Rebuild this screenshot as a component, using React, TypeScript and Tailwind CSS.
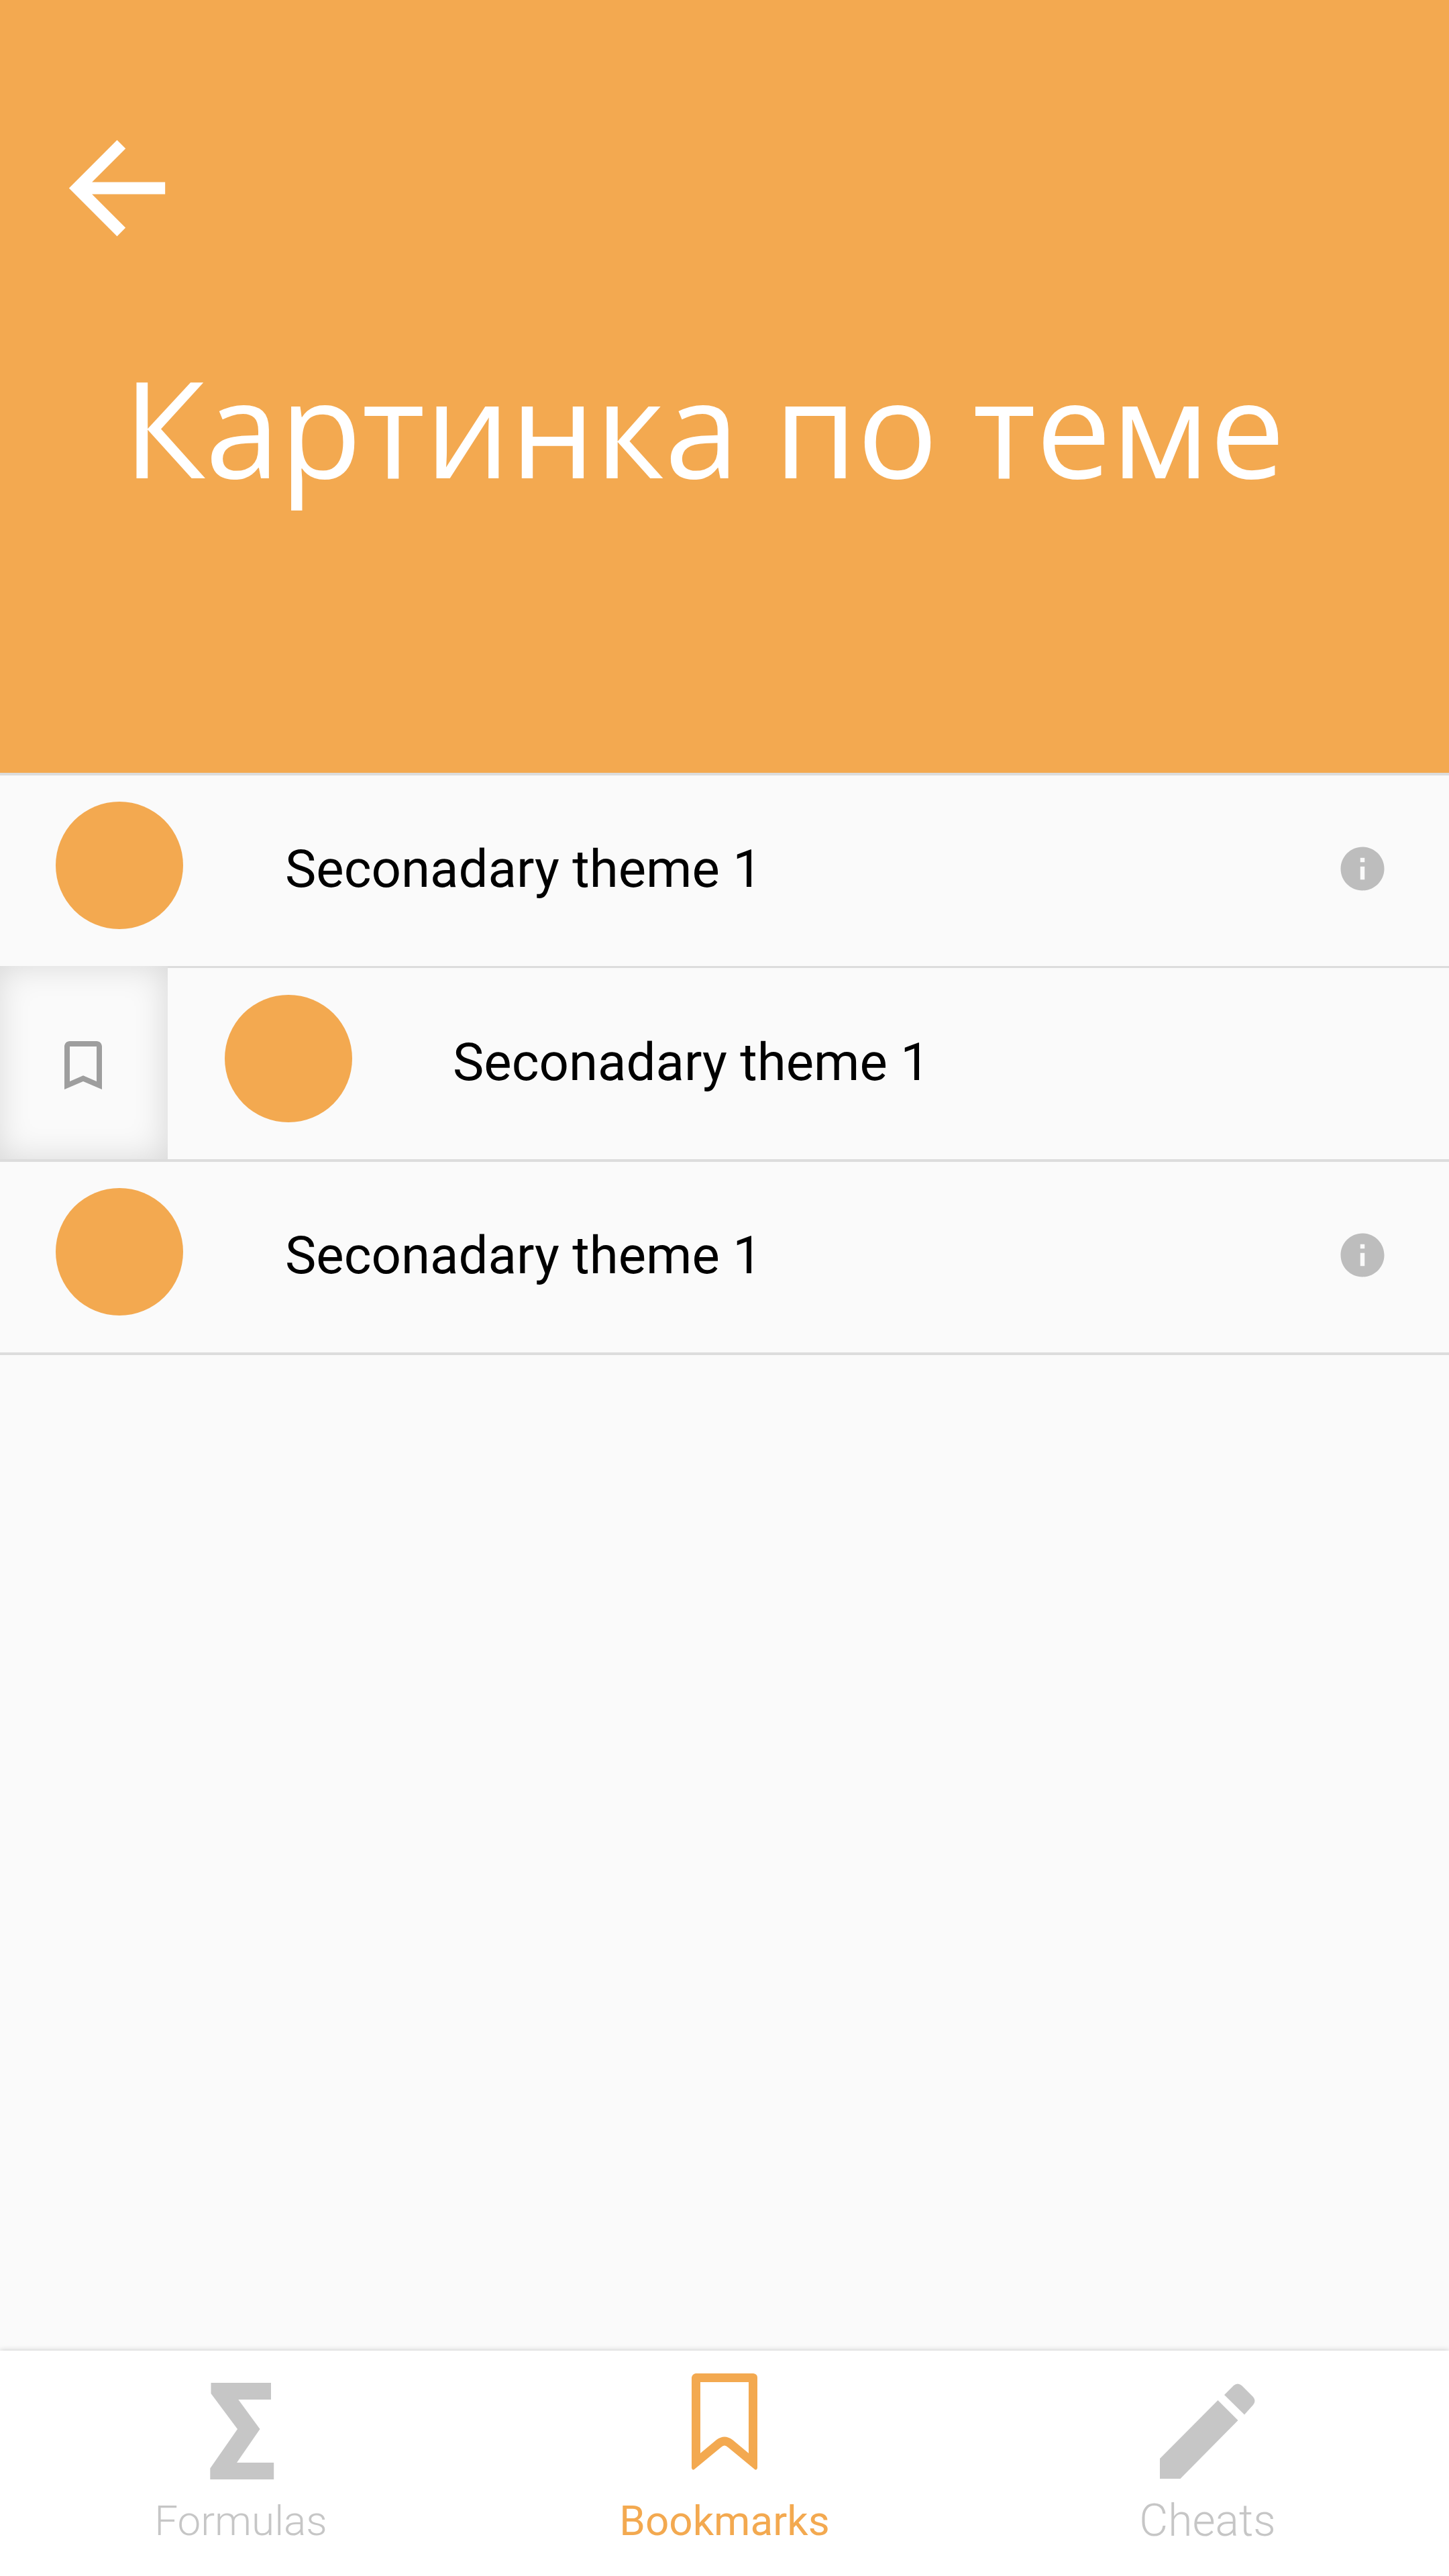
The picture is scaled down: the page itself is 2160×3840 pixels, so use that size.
import type { ReactNode } from "react";

function Row({ revealed = false }: { revealed?: boolean }) {
  return (
    <li className="flex h-[288px] w-full overflow-hidden">
      {revealed && (
        <div className="h-[288px] w-[250px] shrink-0 pl-[76px] pt-[100px] shadow-[inset_-3px_0_50px_rgba(0,0,0,0.14)]">
          <svg viewBox="0 0 24 24" className="size-24 fill-[#9e9e9e]">
            <path d="M17 3H7c-1.1 0-2 .9-2 2v16l7-3 7 3V5c0-1.100-.9-2-2-2zm0 15-5-2.180L7 18V5h10v13z" />
          </svg>
        </div>
      )}
      <div className={`flex grow items-start border-[#dcdcdc] ${revealed ? "border-t-[3px] pl-[85px] pt-px" : "border-t-[4px] pl-[83px]"}`}>
        <div className="mt-[39px] size-[190px] shrink-0 rounded-full bg-[#f3a950]" />
        <span className={`mt-[90px] whitespace-nowrap text-[78px] leading-[100px] text-black ${revealed ? "ml-[150px]" : "ml-[152px]"}`}>
          Seconadary theme 1
        </span>
        {!revealed && (
          <svg viewBox="0 0 24 24" className="ml-auto mr-[90px] mt-[100px] size-[78px] fill-[#bdbdbd]">
            <path d="M12 2C6.480 2 2 6.480 2 12s4.480 10 10 10 10-4.480 10-10S17.520 2 12 2zm1 15h-2v-6h2v6zm0-8h-2V7h2v2z" />
          </svg>
        )}
      </div>
    </li>
  );
}

function Tab({ icon, label, className }: { icon: ReactNode; label: string; className: string }) {
  return (
    <div className="flex w-[720px] flex-col items-center">
      <div className="h-[214px] pt-[34px]">{icon}</div>
      <span className={`whitespace-nowrap leading-[80px] ${className}`}>{label}</span>
    </div>
  );
}

export default function App() {
  return (
    <div className="flex h-[3840px] w-[2160px] flex-col overflow-hidden bg-[#fafafa] font-['Roboto',sans-serif]">
      <header className="h-[1152px] shrink-0 bg-[#f3a950] pt-[173px]">
        <svg viewBox="0 0 24 24" className="ml-[67px] size-[215px] fill-white">
          <path d="M20 11H7.830l5.590-5.590L12 4l-8 8 8 8 1.410-1.410L7.830 13H20v-2z" />
        </svg>
        <h1 className="ml-[184px] mt-[98px] whitespace-nowrap font-['Open_Sans',sans-serif] text-[200px] leading-[300px] text-white">
          Картинка по теме
        </h1>
      </header>
      <ul className="border-b-[4px] border-[#dcdcdc]">
        <Row />
        <Row revealed />
        <Row />
      </ul>
      <nav className="mt-auto flex h-[336px] shrink-0 bg-white shadow-[0_0_8px_rgba(0,0,0,0.22)]">
        <Tab
          label="Formulas"
          className="mr-[2px] text-[62px] font-light text-[#c6c6c6]"
          icon={
            <svg viewBox="0 0 96 144" className="ml-[2px] mt-[14px] h-36 w-24 fill-[#c6c6c6]">
              <path d="M1.500 0H91V25H42.300L74.500 69 40 119H95.200V144H.3V127.500L41 69 1.500 16Z" />
            </svg>
          }
        />
        <Tab
          label="Bookmarks"
          className="text-[62px] font-normal text-[#f3a950]"
          icon={
            <svg viewBox="0 0 98 144" className="h-36 w-[98px] fill-[#f3a950]" fillRule="evenodd">
              <path d="M6 0H92Q98 1 98 6V141Q97 145 94 143L54 110Q49 105 44 110L4 143Q1 145 0 141V6Q1 1 6 0ZM13 13V119L37 99Q49 90 61 99L85 119V13Z" />
            </svg>
          }
        />
        <Tab
          label="Cheats"
          className="text-[66px] font-light text-[#c6c6c6]"
          icon={
            <svg viewBox="0 0 142 142" className="mt-[15px] size-[142px] fill-[#c6c6c6]">
              <path d="M0 112 86.500 25 116.500 55 30.500 142H0ZM96 17 110 3Q116-2 122 3L139 20Q144 26 139 32L126 46.500Z" />
            </svg>
          }
        />
      </nav>
    </div>
  );
}
